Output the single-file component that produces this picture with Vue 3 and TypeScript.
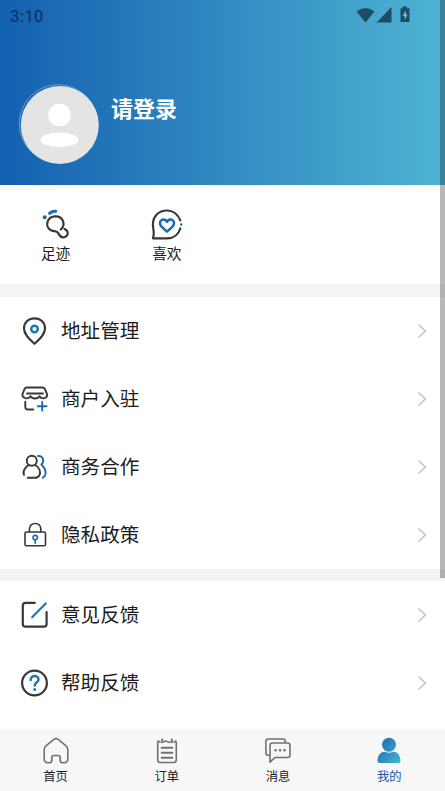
<script setup lang="ts">
interface MenuItem {
  icon: string
  label: string
}

const groups: MenuItem[][] = [
  [
    { icon: 'pin', label: '地址管理' },
    { icon: 'shop', label: '商户入驻' },
    { icon: 'people', label: '商务合作' },
    { icon: 'lock', label: '隐私政策' },
  ],
  [
    { icon: 'edit', label: '意见反馈' },
    { icon: 'help', label: '帮助反馈' },
  ],
]

const tabs: MenuItem[] = [
  { icon: 'home', label: '首页' },
  { icon: 'order', label: '订单' },
  { icon: 'message', label: '消息' },
  { icon: 'mine', label: '我的' },
]
</script>

<template>
  <div class="page">
    <header class="header">
      <div class="status">
        <span class="clock">3:10</span>
        <svg class="signals" width="56" height="18" viewBox="0 0 56 18">
          <path d="M0.5 5.4Q9.500-1.600 18.500 5.400L9.500 16.500Z" />
          <path d="M35.500 1V16.500H20.500Z" />
          <path d="M46.500 0.500H51V2.200H53.500V16H44.500V2.200H46.500Z" />
          <path class="bolt" d="M49.800 4.500L46.600 9.800H48.600V14L51.600 8.600H49.800Z" />
        </svg>
      </div>
      <div class="profile">
        <svg class="avatar" width="82" height="82" viewBox="0 0 82 82">
          <circle class="ring" cx="40.300" cy="40.700" r="39" />
          <circle class="disc" cx="41.800" cy="42" r="39" />
          <circle class="face" cx="41.500" cy="32" r="11.300" />
          <ellipse class="face" cx="41.500" cy="56.800" rx="19" ry="7.200" />
        </svg>
        <span class="login">请登录</span>
      </div>
    </header>

    <section class="quick">
      <div class="quick-item">
        <svg class="icon" width="34" height="34" viewBox="0 0 34 34">
          <path class="dark" d="M21.800 20.500C26.500 16.500 25 7.300 16.500 7.300C7.500 7.300 5.300 18.500 12.500 21.500C15.500 22.700 18 21.500 19.500 24.500C20.800 27.200 22.300 29 25 28.300C28.500 27.500 29.500 24.500 28.200 22.300C27.300 20.700 26 20.500 25.500 19.800" />
          <path class="blue thick" d="M10.600 4.300Q13.500 2 16.700 2.300" />
          <circle class="blue-fill" cx="5.700" cy="8.300" r="2" />
        </svg>
        <span class="quick-label">足迹</span>
      </div>
      <div class="quick-item">
        <svg class="icon" width="34" height="34" viewBox="0 0 34 34">
          <path class="dark" d="M30.300 11.400C27.500 4.500 22.500 1.500 17 1.500C8.500 1.500 2.900 7.500 2.900 15.500C2.900 20 5 24.500 2.900 29.300H17.500C24 29.300 28.700 25 30.300 19.500" />
          <path class="blue heart" d="M17 22.700L11.500 17.600C7 12.700 13.500 7.500 17 12.700C20.500 7.500 27 12.700 22.500 17.600Z" />
          <circle class="blue-fill" cx="31.200" cy="15.500" r="1.200" />
        </svg>
        <span class="quick-label">喜欢</span>
      </div>
    </section>

    <main class="groups">
      <section v-for="(group, index) in groups" :key="index" class="group">
        <div v-for="item in group" :key="item.label" class="row">
          <svg class="icon" width="30" height="30" viewBox="0 0 30 30">
            <template v-if="item.icon === 'pin'">
              <path class="dark" d="M14.500 27.800C10 23.800 4 18.800 4 12.400C4 6.300 8.700 2.300 14.500 2.300S25 6.300 25 12.400C25 18.800 19 23.800 14.500 27.800Z" />
              <circle class="teal ringed" cx="14.500" cy="13" r="3.300" />
            </template>
            <template v-else-if="item.icon === 'shop'">
              <path class="dark thin" d="M7 3.500H22.500Q24.300 3.500 25 5.200L27.100 10.300Q27.500 13 24.500 14.200Q21.500 15 19.500 12.200Q18.500 14.500 15 14.500Q11.500 14.500 10.500 12.200Q8.500 15 5.500 14.200Q2 13 2.400 10.300L4.500 5.200Q5.200 3.500 7 3.500ZM7 9.500H23" />
              <path class="dark thin" d="M5.300 17.700V23Q5.300 25.500 7.800 25.500H13.300" />
              <path class="blue thin" d="M22.200 18V26.600M17.900 22.300H26.500" />
            </template>
            <template v-else-if="item.icon === 'people'">
              <circle class="dark thin" cx="11.800" cy="8.800" r="5" />
              <path class="dark thin" d="M8.500 13C5 15.800 2.500 19.800 4 22.800M15.300 13C19.300 15.800 21 20 19.500 23.200Q18 25.800 15 25.800H7.800" />
              <path class="blue thin" d="M18 4C23 3.500 25 9.500 21.300 12.500C25 16 26.500 20 25 23.500Q24.200 25 22.700 25.700" />
            </template>
            <template v-else-if="item.icon === 'lock'">
              <rect class="dark slim" x="5" y="12" width="20.500" height="13.800" rx="1.300" />
              <path class="dark slim" d="M9.400 11.800V8.800Q10 3.500 15.200 3.500T20.800 8.800V11.800" />
              <circle class="blue slim" cx="15.200" cy="17.600" r="2.200" />
              <path class="blue slim" d="M15.200 20V23.200" />
            </template>
            <template v-else-if="item.icon === 'edit'">
              <path class="dark" d="M14.800 2.800H5.500Q2.800 2.800 2.800 5.500V24Q2.800 26.600 5.500 26.600H24Q26.600 26.600 26.600 24V12" />
              <path class="teal" d="M12.200 17.200L25.700 3.500" />
            </template>
            <template v-else>
              <circle class="dark" cx="14.500" cy="15" r="12.400" />
              <path class="teal question" d="M10.700 12C10.700 6.600 18.700 6.800 18.500 11.700C18.400 14.300 14.700 14.200 14.700 17.500" />
              <circle class="teal-fill" cx="14.700" cy="21.600" r="1.500" />
            </template>
          </svg>
          <span class="label">{{ item.label }}</span>
          <svg class="chevron" width="10" height="16" viewBox="0 0 10 16">
            <path d="M1.500 1.500L8.300 8L1.500 14.500" />
          </svg>
        </div>
      </section>
    </main>

    <nav class="tabbar">
      <div v-for="tab in tabs" :key="tab.label" class="tab" :class="{ active: tab.icon === 'mine' }">
        <svg class="tab-icon" width="28" height="28" viewBox="0 0 28 28">
          <template v-if="tab.icon === 'home'">
            <path d="M12.200 2.200Q14 0.800 15.800 2.200L23.800 8.600Q25.800 10.300 25.800 12.800V21.800Q25.800 25.800 22 25.800H20.700Q18.200 25.800 18.200 23.300V20.500Q18.200 18.500 16.200 18.500H11.800Q9.800 18.500 9.800 20.500V23.300Q9.800 25.800 7.300 25.800H6Q2.200 25.800 2.200 21.800V12.800Q2.200 10.300 4.200 8.600Z" />
          </template>
          <template v-else-if="tab.icon === 'order'">
            <path d="M7 5.200L5.600 4.200Q4.700 4 4.700 5.500V22.800Q4.700 25.500 7.400 25.500H20.600Q23.300 25.500 23.300 22.800V5.500Q23.300 4 22.400 4.200L21 5.200M11 5Q12.500 3.300 14 4.500T17 5" />
            <path class="strong" d="M9.200 2.500V5.200M18.800 2.500V5.200M8.700 10.700H19.300M8.700 15.700H19.300M8.700 20.700H19.300" />
          </template>
          <template v-else-if="tab.icon === 'message'">
            <path d="M5 18.200H4Q1.900 18.200 1.900 16V4.300Q1.900 2 4.200 2H19Q21.300 2 21.300 4.300V5.500" />
            <path d="M8.500 6H23.500Q26 6 26 8.500V18Q26 20.500 23.500 20.500H11L6 25.200V8.500Q6 6 8.500 6Z" />
            <path class="dots" d="M11.500 13.200H11.600M16 13.200H16.100M20.500 13.200H20.600" />
          </template>
          <template v-else>
            <defs>
              <linearGradient id="mine-fill" gradientUnits="userSpaceOnUse" x1="4" y1="8" x2="25" y2="23">
                <stop offset="0" stop-color="#2472b6" />
                <stop offset="1" stop-color="#41b2cf" />
              </linearGradient>
            </defs>
            <circle class="person" cx="14" cy="7.800" r="7" />
            <path class="person" d="M2.500 24C2.500 18 6.500 14 10.500 15Q14 16.300 17.500 15C21.500 14 25.500 18 25.500 24Q25.500 26 23.500 26H4.500Q2.500 26 2.500 24Z" />
          </template>
        </svg>
        <span>{{ tab.label }}</span>
      </div>
    </nav>
    <div class="scrollbar"></div>
  </div>
</template>

<style>
body {
  margin: 0;
  overflow: hidden;
}
</style>

<style scoped>
.page {
  position: relative;
  display: flex;
  flex-direction: column;
  height: 791px;
  overflow: hidden;
  background: #fff;
  color: #1c1c1c;
  font-family: "Noto Sans CJK SC", sans-serif;
}
.header {
  flex: none;
  height: 185px;
  background: linear-gradient(90deg, #1360b0, #4fb4d3);
}
.status {
  display: flex;
  justify-content: space-between;
  height: 30px;
  padding: 6px 33px 0 10px;
  box-sizing: border-box;
  color: #123767;
}
.clock {
  font: 500 17px/20px Roboto, sans-serif;
}
.signals {
  fill: #1d4d62;
}
.bolt {
  fill: #72bfd5;
}
.profile {
  display: flex;
  align-items: flex-start;
  gap: 10px;
  padding: 53px 0 0 18px;
}
.avatar {
  flex: none;
}
.ring {
  fill: none;
  stroke: #709fc8;
  stroke-width: 1;
}
.disc {
  fill: #e4e4e4;
}
.face {
  fill: #fff;
}
.login {
  margin-left: 1px;
  padding-top: 8px;
  color: #fff;
  font-size: 22px;
  font-weight: 700;
  line-height: 32px;
}
.quick {
  display: flex;
  flex: none;
  height: 99px;
}
.quick-item {
  display: flex;
  flex-direction: column;
  align-items: center;
  width: 111.250px;
  padding-top: 24px;
  box-sizing: border-box;
  font-size: 14.700px;
  line-height: 22px;
}
.quick-label {
  margin-top: -1px;
}
.icon {
  flex: none;
  fill: none;
  stroke-width: 2.200;
  stroke-linecap: round;
  stroke-linejoin: round;
}
.dark {
  stroke: #38383a;
}
.blue {
  stroke: #1e68b3;
}
.teal {
  stroke: #1b79b3;
}
.thin {
  stroke-width: 1.900;
}
.slim {
  stroke-width: 1.600;
}
.thick {
  stroke-width: 3;
}
.heart,
.ringed,
.question {
  stroke-width: 2.500;
}
.blue-fill {
  fill: #1e68b3;
}
.teal-fill {
  fill: #1b79b3;
}
.groups {
  flex: 1;
  min-height: 0;
  overflow: hidden;
}
.group {
  border-top: 12px solid #f4f4f6;
}
.group:first-child {
  border-top-width: 13px;
}
.row {
  display: flex;
  align-items: center;
  height: 68px;
  padding: 0 18px 0 20px;
}
.label {
  flex: 1;
  margin: -3px 0 0 11px;
  font-size: 19.600px;
  line-height: 30px;
}
.chevron {
  fill: none;
  stroke: #c5c5c9;
  stroke-width: 1.600;
}
.tabbar {
  display: flex;
  flex: none;
  height: 62px;
  background: #f7f7f7;
}
.tab {
  display: flex;
  flex: 1;
  flex-direction: column;
  align-items: center;
  padding-top: 8px;
  font-size: 12.300px;
  line-height: 22px;
}
.active {
  color: #1757a2;
}
.tab-icon {
  fill: none;
  stroke: #717171;
  stroke-width: 1.600;
  stroke-linecap: round;
  stroke-linejoin: round;
}
.strong {
  stroke-width: 2;
}
.dots {
  stroke-width: 2.500;
}
.person {
  fill: url(#mine-fill);
  stroke: none;
}
.scrollbar {
  position: absolute;
  top: 0;
  right: 0;
  width: 5px;
  height: 578px;
  background: rgba(0, 0, 0, 0.280);
}
</style>
